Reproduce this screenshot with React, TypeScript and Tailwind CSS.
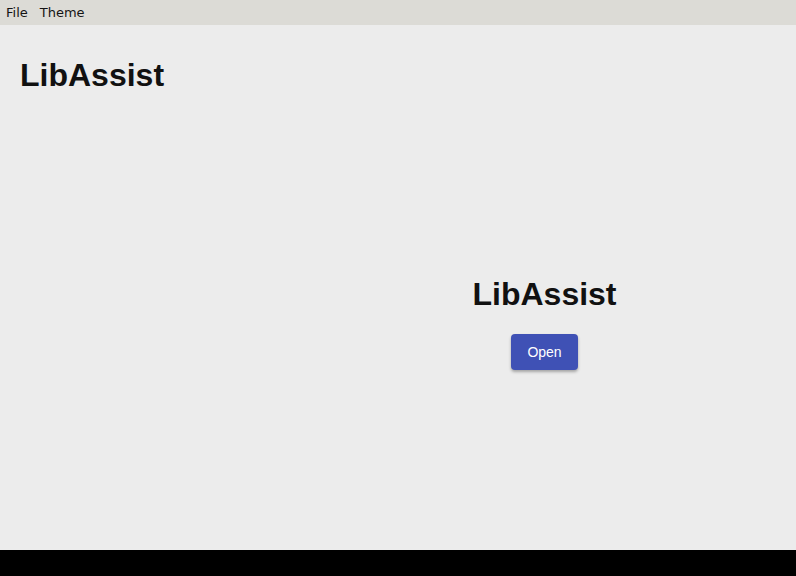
export default function App() {
  return (
    <div className="flex h-[576px] w-[796px] flex-col bg-black">
      {/* menu bar */}
      <div className="flex h-[25px] items-center gap-[12px] bg-[#dcdbd6] px-[6px] text-[13px] text-[#141414] [font-family:'DejaVu_Sans',sans-serif]">
        <span>File</span>
        <span>Theme</span>
      </div>

      <div className="flex h-[525px] bg-[#ececec] [font-family:'Liberation_Sans',Arial,sans-serif]">
        <div className="w-[293px] px-[20px] pt-[30px]">
          <h1 className="text-[32px] font-bold leading-[40px] text-[#111]">LibAssist</h1>
        </div>
        <div className="flex flex-1 flex-col items-center pt-[249px]">
          <h1 className="text-[32px] font-bold leading-[40px] text-[#111]">LibAssist</h1>
          <button className="mt-[20px] h-[36px] w-[67px] rounded-[4px] bg-[#3f51b5] text-[14px] text-white shadow-[0_2px_3px_rgba(0,0,0,0.3)]">
            Open
          </button>
        </div>
      </div>
    </div>
  );
}
